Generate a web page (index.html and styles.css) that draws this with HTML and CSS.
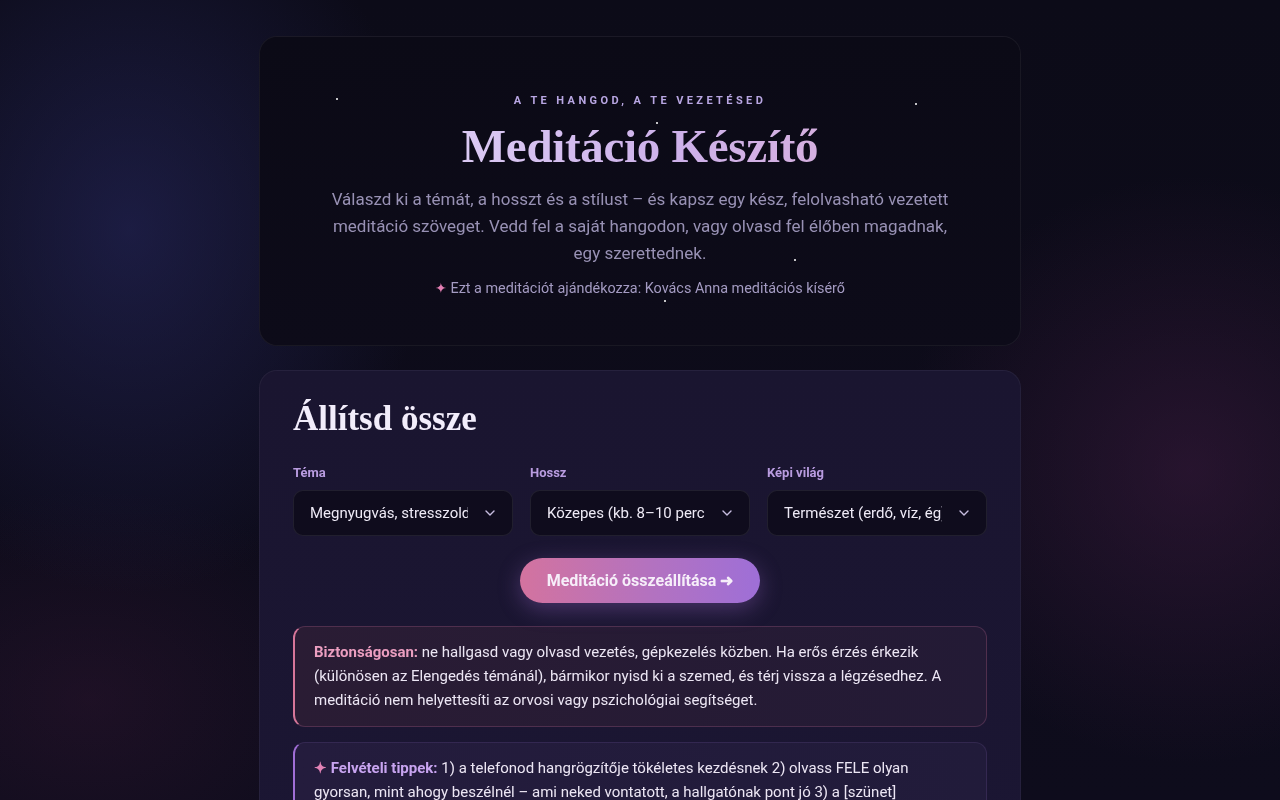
FILE: index.html
```html
<!DOCTYPE html>
<html lang="hu">
<head>
<meta charset="utf-8">
<title>Meditáció Készítő</title>
<link rel="stylesheet" href="styles.css">
</head>
<body>
<div class="bg"></div>
<main class="wrap">
  <header class="hero">
    <span class="star" style="left:76px;top:61px"></span>
    <span class="star" style="left:655px;top:66px"></span>
    <span class="star" style="left:396px;top:85px"></span>
    <span class="star" style="left:534px;top:222px"></span>
    <span class="star" style="left:404px;top:263px"></span>
    <p class="eyebrow">A TE HANGOD, A TE VEZETÉSED</p>
    <h1 class="title">Meditáció Készítő</h1>
    <p class="lead">Válaszd ki a témát, a hosszt és a stílust – és kapsz egy kész, felolvasható vezetett meditáció szöveget. Vedd fel a saját hangodon, vagy olvasd fel élőben magadnak, egy szerettednek.</p>
    <p class="gift"><span class="gift-star">✦</span> Ezt a meditációt ajándékozza: Kovács Anna meditációs kísérő</p>
  </header>

  <section class="card">
    <h2 class="card-title">Állítsd össze</h2>
    <div class="fields">
      <label class="field">
        <span class="label">Téma</span>
        <span class="select"><span class="select-text">Megnyugvás, stresszoldás</span><svg class="chev" viewBox="0 0 12 12" width="12" height="12"><path d="M2 4l4 4 4-4" fill="none" stroke="currentColor" stroke-width="1.4" stroke-linecap="round" stroke-linejoin="round"/></svg></span>
      </label>
      <label class="field">
        <span class="label">Hossz</span>
        <span class="select"><span class="select-text">Közepes (kb. 8–10 perc)</span><svg class="chev" viewBox="0 0 12 12" width="12" height="12"><path d="M2 4l4 4 4-4" fill="none" stroke="currentColor" stroke-width="1.4" stroke-linecap="round" stroke-linejoin="round"/></svg></span>
      </label>
      <label class="field">
        <span class="label">Képi világ</span>
        <span class="select"><span class="select-text">Természet (erdő, víz, ég)</span><svg class="chev" viewBox="0 0 12 12" width="12" height="12"><path d="M2 4l4 4 4-4" fill="none" stroke="currentColor" stroke-width="1.4" stroke-linecap="round" stroke-linejoin="round"/></svg></span>
      </label>
    </div>
    <div class="actions">
      <button class="btn">Meditáció összeállítása ➜</button>
    </div>
    <div class="note note-warn">
      <strong class="warn-label">Biztonságosan:</strong> ne hallgasd vagy olvasd vezetés, gépkezelés közben. Ha erős érzés érkezik (különösen az Elengedés témánál), bármikor nyisd ki a szemed, és térj vissza a légzésedhez. A meditáció nem helyettesíti az orvosi vagy pszichológiai segítséget.
    </div>
    <div class="note note-tip">
      <strong class="tip-label"><span class="tip-star">✦</span> Felvételi tippek:</strong> 1) a telefonod hangrögzítője tökéletes kezdésnek 2) olvass FELE olyan gyorsan, mint ahogy beszélnél – ami neked vontatott, a hallgatónak pont jó 3) a [szünet] jelöléseknél tarts 3–5 másodperc csendet 4) halk háttérzene segíthet, de ne nyomja el a hangod.
    </div>
  </section>
</main>
</body>
</html>
```

FILE: styles.css
```css
* { box-sizing: border-box; }
html, body { margin: 0; padding: 0; }
body {
  background: #0b0a16;
  color: #ece8f5;
  font-family: "Roboto", "Inter", "Noto Sans", sans-serif;
  min-height: 100vh;
}
.bg {
  position: fixed;
  inset: 0;
  z-index: 0;
  background:
    radial-gradient(ellipse 420px 520px at 130px 230px, rgba(40, 42, 100, 0.55), transparent 70%),
    radial-gradient(ellipse 420px 420px at 1190px 470px, rgba(70, 30, 70, 0.45), transparent 70%),
    radial-gradient(ellipse 400px 300px at 90px 700px, rgba(60, 25, 55, 0.35), transparent 70%),
    linear-gradient(180deg, #0c0b18 0%, #0e0c1c 100%);
}
.wrap {
  position: relative;
  z-index: 1;
  width: 762px;
  margin: 0 auto;
  padding-top: 36px;
  display: flex;
  flex-direction: column;
  gap: 24px;
}
.hero {
  position: relative;
  background: linear-gradient(180deg, #0b0a16 0%, #0d0b19 100%);
  border: 1px solid rgba(255, 255, 255, 0.06);
  border-radius: 18px;
  padding: 57px 60px 47px;
  text-align: center;
}
.star {
  position: absolute;
  width: 1.5px;
  height: 1.5px;
  background: #fff;
  border-radius: 50%;
  opacity: 0.9;
}
.eyebrow {
  margin: 0;
  font-size: 11px;
  font-weight: 700;
  letter-spacing: 3.4px;
  color: #b8a6e2;
  line-height: 14px;
}
.title {
  margin: 10px 0 0;
  font-family: "Liberation Serif", "DejaVu Serif", serif;
  font-weight: 700;
  font-size: 47px;
  line-height: 56px;
  letter-spacing: -0.3px;
  background: linear-gradient(90deg, #e4dafa 0%, #cdb1ea 55%, #dcaed6 100%);
  -webkit-background-clip: text;
  background-clip: text;
  color: transparent;
}
.lead {
  margin: 12px auto 0;
  max-width: 630px;
  font-size: 17px;
  line-height: 27px;
  color: #9891b4;
}
.gift {
  margin: 13px 0 0;
  font-size: 14.4px;
  line-height: 18px;
  color: #a49bc2;
}
.gift-star { color: #e27fb3; }

.card {
  background: linear-gradient(180deg, #1a1530 0%, #1b1633 100%);
  border: 1px solid rgba(255, 255, 255, 0.05);
  border-radius: 18px;
  padding: 26px 33px 40px;
}
.card-title {
  margin: 0;
  font-family: "Liberation Serif", "DejaVu Serif", serif;
  font-weight: 700;
  font-size: 35px;
  line-height: 44px;
  color: #f2edfb;
}
.fields {
  margin-top: 24px;
  display: grid;
  grid-template-columns: repeat(3, 1fr);
  gap: 17px;
}
.field { display: flex; flex-direction: column; gap: 9px; }
.label {
  font-size: 13px;
  font-weight: 700;
  color: #b99ce0;
  line-height: 16px;
}
.select {
  height: 46px;
  display: flex;
  align-items: center;
  justify-content: space-between;
  padding: 0 16px 0 16px;
  background: #0f0c1d;
  border: 1px solid rgba(255, 255, 255, 0.08);
  border-radius: 10px;
  font-size: 15px;
  color: #eeeaf6;
}
.select-text {
  white-space: nowrap;
  overflow: hidden;
  width: 158px;
}
.chev { color: #c7bde0; flex: none; }
.actions {
  margin-top: 22px;
  display: flex;
  justify-content: center;
}
.btn {
  height: 45px;
  padding: 0 27px;
  border: none;
  border-radius: 999px;
  background: linear-gradient(90deg, #d3739f 0%, #b372c0 55%, #9e6fd7 100%);
  color: #f6eef9;
  font-family: inherit;
  font-size: 16px;
  font-weight: 700;
  box-shadow: 0 6px 22px rgba(160, 110, 210, 0.35);
}
.note {
  margin-top: 23px;
  padding: 13px 20px 14px 19px;
  border-radius: 12px;
  font-size: 15px;
  line-height: 24px;
  color: #ece6f4;
}
.note + .note { margin-top: 15px; }
.note-warn {
  background: linear-gradient(90deg, #2a1c34 0%, #231a35 100%);
  border: 1px solid rgba(220, 120, 170, 0.22);
  border-left: 2px solid #d67699;
}
.note-tip {
  background: linear-gradient(90deg, #241c3d 0%, #211b3a 100%);
  border: 1px solid rgba(170, 130, 230, 0.12);
  border-left: 2px solid #a06ed6;
}
.warn-label { color: #eb9ec0; }
.tip-label { color: #c8a4f0; }
.tip-star { color: #e283b6; }
```
